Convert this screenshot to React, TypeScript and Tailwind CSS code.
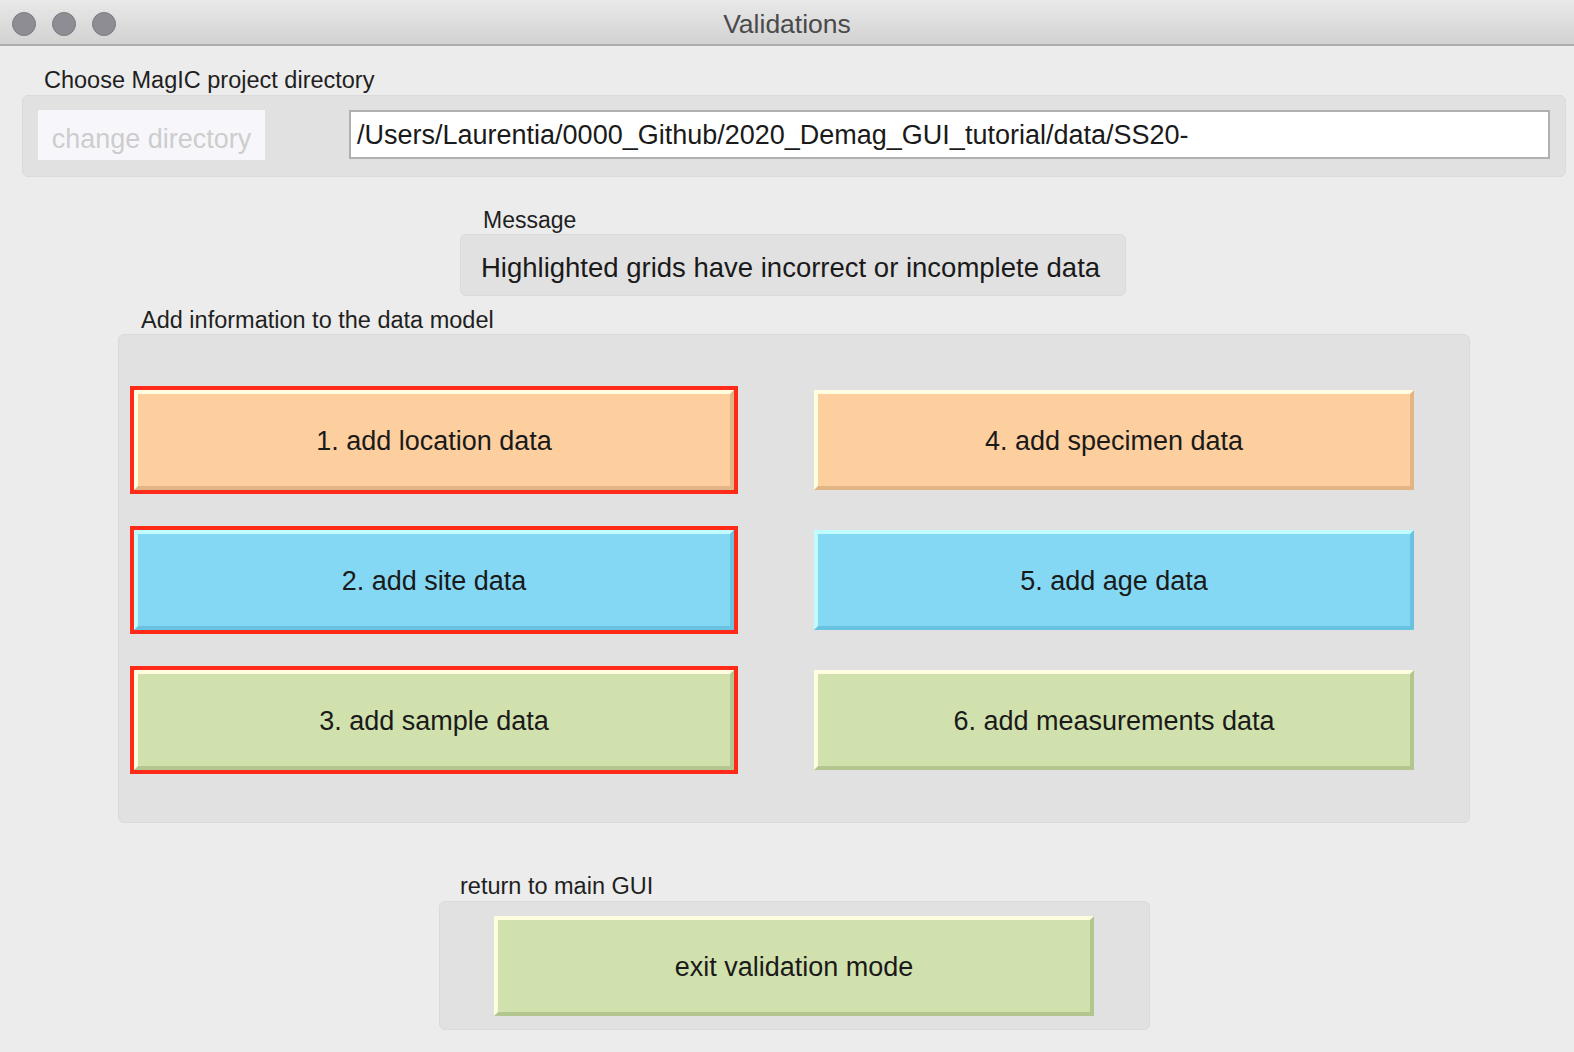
import { JSX } from "react/jsx-runtime";

interface GridButton {
  id: number;
  label: string;
  color: "orange" | "blue" | "green";
  invalid: boolean;
}

const colorClasses: Record<GridButton["color"], string> = {
  orange: "bg-[#fdcf9f] border-t-[#fffde0] border-l-[#fffde0] border-b-[#e2b586] border-r-[#e2b586]",
  blue: "bg-[#84d8f3] border-t-[#c0fbfe] border-l-[#c0fbfe] border-b-[#69c2e0] border-r-[#69c2e0]",
  green: "bg-[#d1e1ae] border-t-[#fefde0] border-l-[#fefde0] border-b-[#b4c690] border-r-[#b4c690]",
};

function BevelButton({ label, color, invalid }: { label: string; color: GridButton["color"]; invalid?: boolean }): JSX.Element {
  return (
    <button
      className={
        "flex h-[100px] w-[600px] items-center justify-center border-4 border-solid pt-[2px] text-[27px] text-[#1a1a1a] " +
        colorClasses[color] +
        (invalid ? " ring-4 ring-[#ff2a1a]" : "")
      }
    >
      {label}
    </button>
  );
}

export default function App(): JSX.Element {
  const leftCol: GridButton[] = [
    { id: 1, label: "1. add location data", color: "orange", invalid: true },
    { id: 2, label: "2. add site data", color: "blue", invalid: true },
    { id: 3, label: "3. add sample data", color: "green", invalid: true },
  ];

  const rightCol: GridButton[] = [
    { id: 4, label: "4. add specimen data", color: "orange", invalid: false },
    { id: 5, label: "5. add age data", color: "blue", invalid: false },
    { id: 6, label: "6. add measurements data", color: "green", invalid: false },
  ];

  return (
    <div className="h-[1052px] w-[1574px] overflow-hidden bg-[#ececec] font-['Liberation_Sans',Arial,sans-serif]">
      {/* Title bar */}
      <div className="relative flex h-[46px] items-center justify-center border-b-2 border-[#adadad] bg-gradient-to-b from-[#e9e9e9] to-[#d2d2d2] pt-[6px]">
        <div className="absolute left-[12px] top-[12px] flex gap-4">
          <div className="h-6 w-6 rounded-full border border-[#7b7a80] bg-[#8e8d93]"></div>
          <div className="h-6 w-6 rounded-full border border-[#7b7a80] bg-[#8e8d93]"></div>
          <div className="h-6 w-6 rounded-full border border-[#7b7a80] bg-[#8e8d93]"></div>
        </div>
        <span className="text-[26.5px] text-[#4a4a4a]">Validations</span>
      </div>

      {/* Directory */}
      <div className="ml-[44px] mt-[20px] text-[23.5px] leading-[28px] text-[#1f1f1f]">Choose MagIC project directory</div>
      <div className="ml-[22px] mt-[1px] flex h-[82px] w-[1544px] items-start rounded-md border border-[#dadada] bg-[#e1e1e1] pl-[15px] pt-[14px]">
        <div className="flex h-[50px] w-[227px] items-center justify-center bg-[#f7f7fb] pt-[8px] text-[27px] text-[#cdcdcd]">
          change directory
        </div>
        <div className="ml-[84px] flex h-[49px] w-[1201px] items-center border-2 border-[#b0b0b0] bg-white pl-[6px] pt-[2px] text-[27px] text-[#1a1a1a]">
          /Users/Laurentia/0000_Github/2020_Demag_GUI_tutorial/data/SS20-
        </div>
      </div>

      {/* Message */}
      <div className="ml-[483px] mt-[29px] text-[23px] leading-[28px] text-[#1f1f1f]">Message</div>
      <div className="ml-[460px] flex h-[62px] w-[666px] items-center rounded-md border border-[#dadada] bg-[#e1e1e1] pl-[20px] pt-[6px] text-[27.5px] text-[#1a1a1a]">
        Highlighted grids have incorrect or incomplete data
      </div>

      {/* Data model buttons */}
      <div className="ml-[141px] mt-[10px] text-[23.5px] leading-[28px] text-[#1f1f1f]">Add information to the data model</div>
      <div className="ml-[118px] flex h-[489px] w-[1352px] gap-[80px] rounded-md border border-[#dadada] bg-[#e1e1e1] pl-[15px] pt-[55px]">
        <div className="flex flex-col gap-[40px]">
          {leftCol.map((b) => (
            <BevelButton key={b.id} label={b.label} color={b.color} invalid={b.invalid} />
          ))}
        </div>
        <div className="flex flex-col gap-[40px]">
          {rightCol.map((b) => (
            <BevelButton key={b.id} label={b.label} color={b.color} invalid={b.invalid} />
          ))}
        </div>
      </div>

      {/* Exit */}
      <div className="ml-[460px] mt-[49px] text-[23.5px] leading-[28px] text-[#1f1f1f]">return to main GUI</div>
      <div className="ml-[439px] mt-[1px] h-[129px] w-[711px] rounded-md border border-[#dadada] bg-[#e1e1e1] pl-[54px] pt-[14px]">
        <BevelButton label="exit validation mode" color="green" />
      </div>
    </div>
  );
}
